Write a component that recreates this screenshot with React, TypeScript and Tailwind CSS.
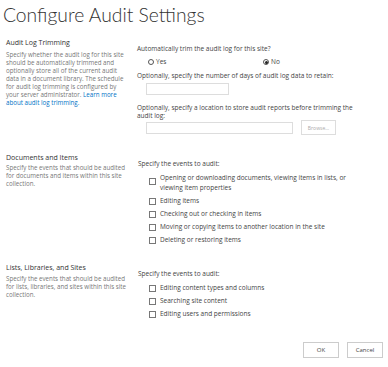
import React from "react";

const font = { fontFamily: '"Open Sans", "Noto Sans", sans-serif' };

function Radio({ checked, label }: { checked?: boolean; label: string }) {
  return (
    <div className="flex items-center gap-[2px]">
      <span className="w-[6px] h-[6px] rounded-full border border-[#555] flex items-center justify-center bg-white">
        {checked && <span className="w-[3px] h-[3px] rounded-full bg-[#222]" />}
      </span>
      <span>{label}</span>
    </div>
  );
}

function Check({ label, label2 }: { label: string; label2?: string }) {
  return (
    <div className="flex items-start">
      <span className={`w-[7px] h-[7px] border border-[#777] bg-white shrink-0 ${label2 ? "mt-[5px]" : "mt-[1.5px]"}`} />
      <div className="ml-[4px] leading-[10px]">
        <div>{label}</div>
        {label2 && <div>{label2}</div>}
      </div>
    </div>
  );
}

export default function App() {
  return (
    <div className="w-[388px] h-[367px] bg-white text-[#444] relative overflow-hidden" style={font}>
      <div
        className="pl-[3px] pt-[1px] text-[19.3px] font-light leading-[27px] text-[#333]"
        style={{ fontFamily: 'Lato, "Open Sans", sans-serif' }}
      >
        Configure Audit Settings
      </div>

      {/* Section 1 */}
      <div className="flex mt-[10px]">
        <div className="w-[131px] pl-[6px] shrink-0">
          <div className="text-[7px] leading-[10px] text-[#333]">Audit Log Trimming</div>
          <div className="text-[6.2px] leading-[8px] text-[#777] mt-[3px]">
            Specify whether the audit log for this site
            <br />
            should be automatically trimmed and
            <br />
            optionally store all of the current audit
            <br />
            data in a document library. The schedule
            <br />
            for audit log trimming is configured by
            <br />
            your server administrator. <span className="text-[#0072c6]">Learn more</span>
            <br />
            <span className="text-[#0072c6]">about audit log trimming.</span>
          </div>
        </div>
        <div className="text-[6.5px] leading-[8px] pl-[6px] pt-[7px]">
          <div>Automatically trim the audit log for this site?</div>
          <div className="flex pl-[11px] mt-[5px]">
            <div className="w-[115px]">
              <Radio label="Yes" />
            </div>
            <Radio checked label="No" />
          </div>
          <div className="mt-[6px]">Optionally, specify the number of days of audit log data to retain:</div>
          <div className="ml-[9px] mt-[3px] w-[83px] h-[12px] border border-[#ddd]" />
          <div className="mt-[9px]">Optionally, specify a location to store audit reports before trimming the</div>
          <div>audit log:</div>
          <div className="flex items-center mt-[0px] ml-[9px]">
            <div className="w-[147px] h-[12px] border border-[#ddd]" />
            <div className="ml-[8px] w-[35px] h-[15px] border border-[#ddd] text-[#aaa] text-[5px] flex items-center justify-center">
              Browse...
            </div>
          </div>
        </div>
      </div>

      {/* Section 2 */}
      <div className="flex mt-[18px]">
        <div className="w-[131px] pl-[6px] shrink-0">
          <div className="text-[7px] leading-[10px] text-[#333]">Documents and Items</div>
          <div className="text-[6.2px] leading-[8px] text-[#777] mt-[1px]">
            Specify the events that should be audited
            <br />
            for documents and items within this site
            <br />
            collection.
          </div>
        </div>
        <div className="text-[6.5px] leading-[8px] pl-[7px] pt-[7px]">
          <div>Specify the events to audit:</div>
          <div className="pl-[11px] mt-[5px] flex flex-col gap-[3px]">
            <Check label="Opening or downloading documents, viewing items in lists, or" label2="viewing item properties" />
            <Check label="Editing items" />
            <Check label="Checking out or checking in items" />
            <Check label="Moving or copying items to another location in the site" />
            <Check label="Deleting or restoring items" />
          </div>
        </div>
      </div>

      {/* Section 3 */}
      <div className="flex mt-[18px]">
        <div className="w-[131px] pl-[6px] shrink-0">
          <div className="text-[7px] leading-[10px] text-[#333]">Lists, Libraries, and Sites</div>
          <div className="text-[6.2px] leading-[8px] text-[#777] mt-[2px]">
            Specify the events that should be audited
            <br />
            for lists, libraries, and sites within this site
            <br />
            collection.
          </div>
        </div>
        <div className="text-[6.5px] leading-[8px] pl-[7px] pt-[7px]">
          <div>Specify the events to audit:</div>
          <div className="pl-[11px] mt-[5px] flex flex-col gap-[3px]">
            <Check label="Editing content types and columns" />
            <Check label="Searching site content" />
            <Check label="Editing users and permissions" />
          </div>
        </div>
      </div>

      <div className="flex justify-end gap-[8px] pr-[5px] mt-[23px]">
        <div className="w-[36px] h-[16px] border border-[#ccc] text-[6px] flex items-center justify-center">OK</div>
        <div className="w-[36px] h-[16px] border border-[#ccc] text-[6px] flex items-center justify-center">Cancel</div>
      </div>
    </div>
  );
}
